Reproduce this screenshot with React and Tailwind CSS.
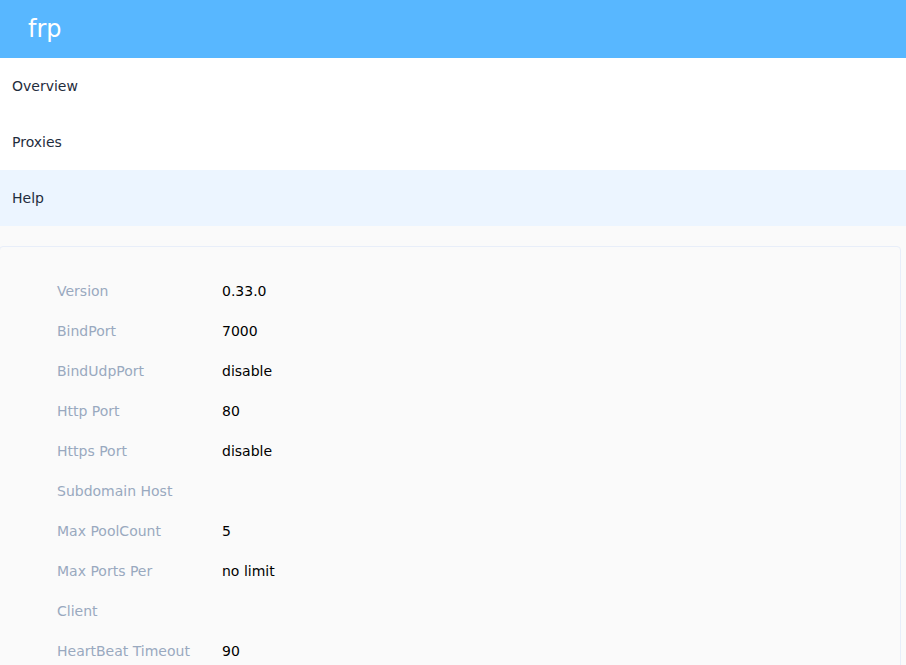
import React from 'react'

const rows = [
  ['Version', '0.33.0'],
  ['BindPort', '7000'],
  ['BindUdpPort', 'disable'],
  ['Http Port', '80'],
  ['Https Port', 'disable'],
  ['Subdomain Host', ''],
  ['Max PoolCount', '5'],
  ['Max Ports Per', 'no limit'],
  ['Client', ''],
  ['HeartBeat Timeout', '90'],
]

export default function App() {
  return (
    <div className="min-h-screen bg-[#fafafa] text-sm" style={{ fontFamily: '"DejaVu Sans", sans-serif' }}>
      <header className="h-[58px] bg-[#58b7ff] flex items-center px-[28px]">
        <span className="text-white text-2xl">frp</span>
      </header>
      <nav className="bg-white">
        <div className="h-14 flex items-center px-3 text-[#1f2d3d]">Overview</div>
        <div className="h-14 flex items-center px-3 text-[#1f2d3d]">Proxies</div>
        <div className="h-14 flex items-center px-3 text-[#1f2d3d] bg-[#ecf5ff]">Help</div>
      </nav>
      <div className="pt-5 pr-[5px]">
        <div className="border border-[#e8eef9] rounded bg-[#fafafa] pt-[24px] pb-4 pl-[57px] -ml-px">
          {rows.map(([k, v]) => (
            <div key={k} className="h-10 flex items-center">
              <div className="w-[165px] text-[#99a9bf]">{k}</div>
              <div className="text-black">{v}</div>
            </div>
          ))}
        </div>
      </div>
    </div>
  )
}
